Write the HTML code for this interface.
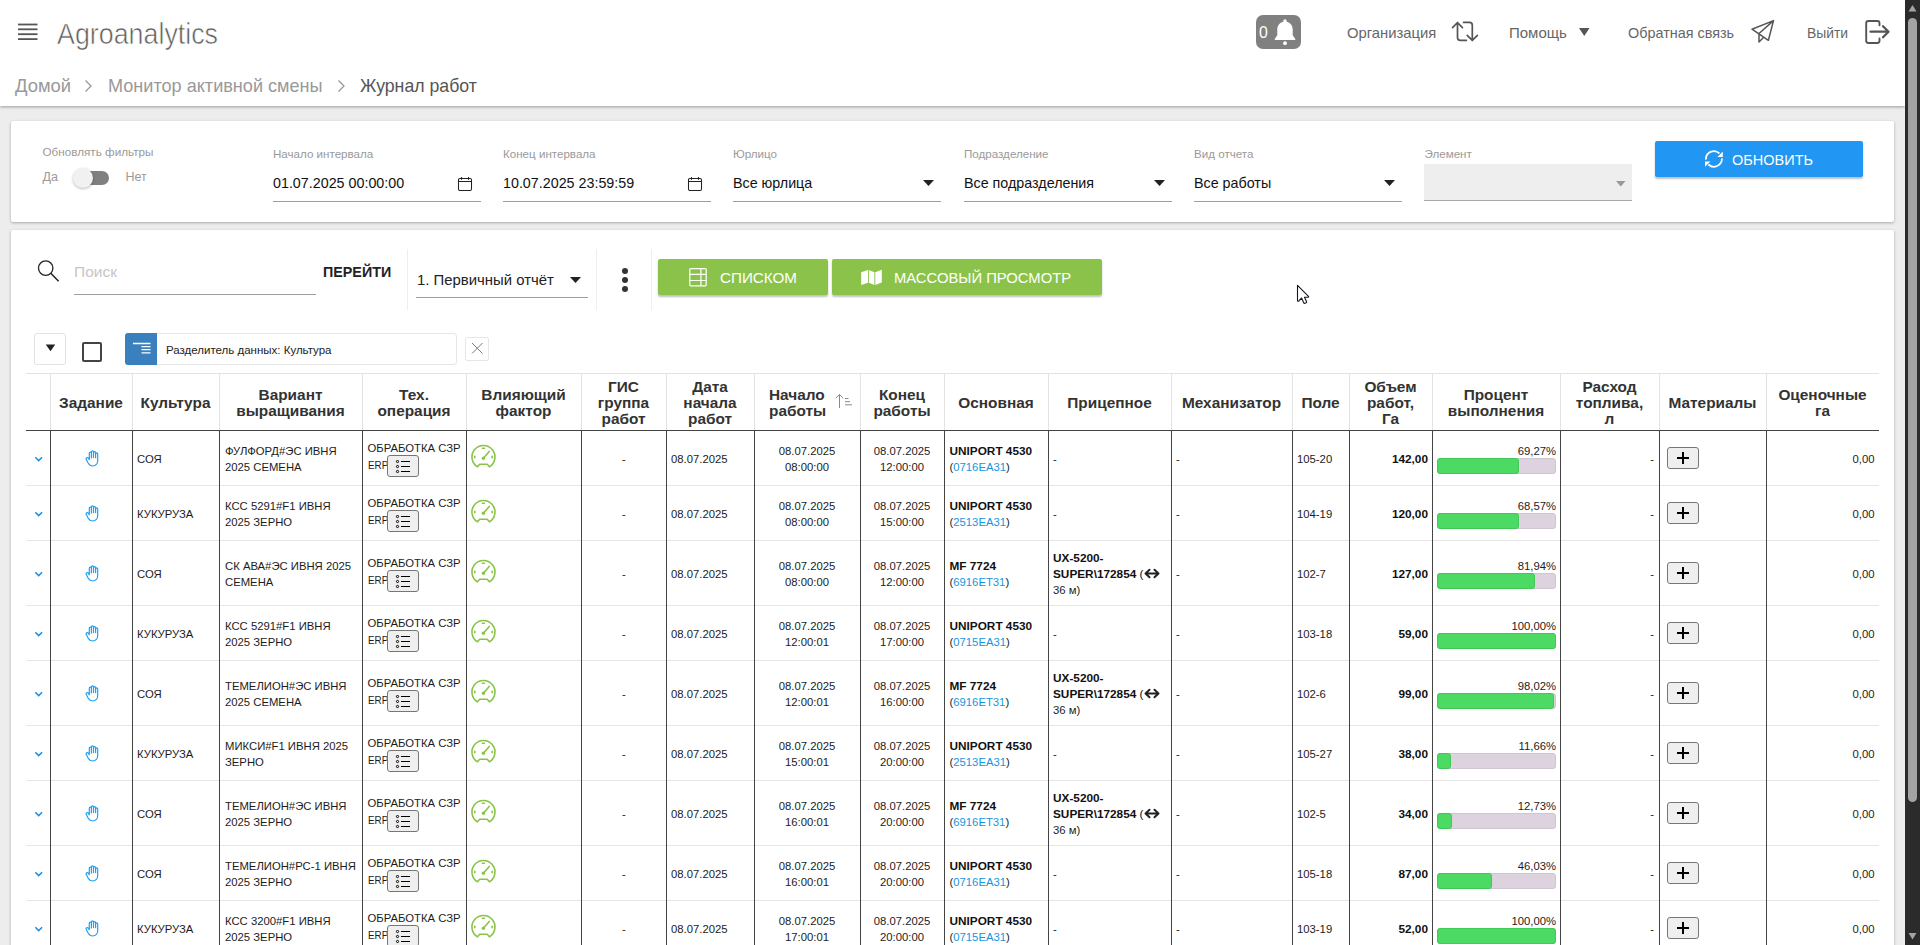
<!DOCTYPE html><html><head><meta charset="utf-8"><style>
html,body{margin:0;padding:0}
body{width:1920px;height:945px;overflow:hidden;position:relative;background:#ededed;font-family:"Liberation Sans",sans-serif}
.t{position:absolute;white-space:nowrap;line-height:normal}
.r{position:absolute;box-sizing:border-box}
</style></head><body>
<div class="r" style="left:0px;top:0px;width:1905px;height:106px;background:#fff;box-shadow:0 1px 3px rgba(0,0,0,.35)"></div>
<svg class="r" style="left:17px;top:22px" width="22" height="20" viewBox="0 0 22 20"><rect x="1" y="1.6" width="19.5" height="1.8" fill="#555"/><rect x="1" y="6.4" width="19.5" height="1.8" fill="#555"/><rect x="1" y="11.3" width="19.5" height="1.8" fill="#555"/><rect x="1" y="16.2" width="19.5" height="1.8" fill="#555"/></svg>
<div class="t" style="left:57px;top:18px;font-size:29.0px;color:#606060;font-weight:normal;transform:scaleX(.925);transform-origin:left;-webkit-text-stroke:0.6px #fff">Agroanalytics</div>
<div class="r" style="left:1256px;top:15px;width:45px;height:34px;background:#808080;border-radius:7px"></div>
<div class="t" style="left:1259px;top:24px;font-size:15.8px;color:#fff;font-weight:normal;">0</div>
<svg class="r" style="left:1271.5px;top:17px" width="26" height="30" viewBox="0 0 26 30"><path d="M13 2.2a1.7 1.7 0 0 1 1.7 1.7v.9c3.6.8 6 4 6 7.7v5.8l2.6 3.6v1H2.7v-1l2.6-3.6v-5.8c0-3.7 2.4-6.9 6-7.7v-.9A1.7 1.7 0 0 1 13 2.2z" fill="#fff"/><circle cx="13" cy="26.2" r="1.9" fill="#fff"/></svg>
<div class="t" style="left:1347px;top:25px;font-size:14.8px;color:#666;font-weight:normal;">Организация</div>
<svg class="r" style="left:1450px;top:20px" width="30" height="24" viewBox="0 0 30 24"><g fill="none" stroke="#555" stroke-width="1.7" stroke-linecap="round" stroke-linejoin="round"><path d="M2.6 7.6 7.5 2.5l4.9 5.1M7.5 2.5v15c0 1.7 1.2 2.9 2.9 2.9h5.9"/><path d="M27.4 15.3l-5.1 5.1-5.1-5.1M22.3 20.4V5.3c0-1.7-1.2-2.9-2.9-2.9h-5.8"/></g></svg>
<div class="t" style="left:1509px;top:24px;font-size:15.0px;color:#666;font-weight:normal;">Помощь</div>
<svg class="r" style="left:1579px;top:28px" width="11" height="9" viewBox="0 0 11 9"><path d="M0 0h10.5L5.25 8z" fill="#555"/></svg>
<div class="t" style="left:1628px;top:25px;font-size:14.4px;color:#666;font-weight:normal;">Обратная связь</div>
<svg class="r" style="left:1750px;top:19px" width="26" height="26" viewBox="0 0 26 26"><g fill="none" stroke="#555" stroke-width="1.5" stroke-linejoin="round"><path d="M23.5 1.6 2 10.2l16.4 11.1z M23.5 1.6 9 14.5v8.6l4.2-4.4"/></g></svg>
<div class="t" style="left:1807px;top:25px;font-size:13.9px;color:#666;font-weight:normal;">Выйти</div>
<svg class="r" style="left:1864px;top:19px" width="28" height="26" viewBox="0 0 28 26"><g fill="none" stroke="#555" stroke-linecap="round" stroke-linejoin="round"><path d="M15.5 6.2V4.2c0-1.3-.9-2.2-2.2-2.2H4.4C3.1 2 2.2 2.9 2.2 4.2v17.6c0 1.3.9 2.2 2.2 2.2h8.9c1.3 0 2.2-.9 2.2-2.2v-2.4" stroke-width="1.9"/><path d="M6.5 12.7h17.5M19 7.2l5.5 5.5-5.5 5.5" stroke-width="2.3"/></g></svg>
<div class="t" style="left:15px;top:75px;font-size:18.4px;color:#999;font-weight:normal;">Домой</div>
<svg class="r" style="left:84px;top:79px" width="9" height="14" viewBox="0 0 9 14"><path d="M1.5 1.5 7 7l-5.5 5.5" fill="none" stroke="#999" stroke-width="1.3"/></svg>
<div class="t" style="left:108px;top:76px;font-size:18.1px;color:#999;font-weight:normal;">Монитор активной смены</div>
<svg class="r" style="left:337px;top:79px" width="9" height="14" viewBox="0 0 9 14"><path d="M1.5 1.5 7 7l-5.5 5.5" fill="none" stroke="#999" stroke-width="1.3"/></svg>
<div class="t" style="left:360px;top:76px;font-size:17.7px;color:#555;font-weight:normal;">Журнал работ</div>
<div class="r" style="left:11px;top:121px;width:1883px;height:101px;background:#fff;border-radius:2px;box-shadow:0 1px 3px rgba(0,0,0,.3)"></div>
<div class="t" style="left:42.5px;top:145px;font-size:11.7px;color:#9a9a9a;font-weight:normal;">Обновлять фильтры</div>
<div class="t" style="left:42.5px;top:170px;font-size:12.5px;color:#9a9a9a;font-weight:normal;">Да</div>
<div class="t" style="left:125.5px;top:170px;font-size:12.5px;color:#9a9a9a;font-weight:normal;">Нет</div>
<div class="r" style="left:76px;top:171px;width:33px;height:14px;background:#808080;border-radius:7px"></div>
<div class="r" style="left:73px;top:168px;width:20px;height:20px;background:#f1f1f1;border-radius:50%;box-shadow:0 1px 3px rgba(0,0,0,.28)"></div>
<div class="t" style="left:273px;top:147px;font-size:11.6px;color:#9a9a9a;font-weight:normal;">Начало интервала</div>
<div class="t" style="left:273px;top:175px;font-size:14.3px;color:#111;font-weight:normal;">01.07.2025 00:00:00</div>
<div class="r" style="left:273px;top:201px;width:208px;height:1px;background:#9e9e9e"></div>
<svg class="r" style="left:457px;top:176px" width="16" height="16" viewBox="0 0 16 16"><g fill="none" stroke="#222" stroke-width="1.05"><rect x="1.5" y="2.5" width="13" height="12" rx="1.4"/><path d="M1.5 5.5h13"/><path d="M4.5 1v2.7M11.5 1v2.7"/></g></svg>
<div class="t" style="left:503px;top:147px;font-size:11.6px;color:#9a9a9a;font-weight:normal;">Конец интервала</div>
<div class="t" style="left:503px;top:175px;font-size:14.3px;color:#111;font-weight:normal;">10.07.2025 23:59:59</div>
<div class="r" style="left:503px;top:201px;width:208px;height:1px;background:#9e9e9e"></div>
<svg class="r" style="left:687px;top:176px" width="16" height="16" viewBox="0 0 16 16"><g fill="none" stroke="#222" stroke-width="1.05"><rect x="1.5" y="2.5" width="13" height="12" rx="1.4"/><path d="M1.5 5.5h13"/><path d="M4.5 1v2.7M11.5 1v2.7"/></g></svg>
<div class="t" style="left:733px;top:147px;font-size:11.6px;color:#9a9a9a;font-weight:normal;">Юрлицо</div>
<div class="t" style="left:733px;top:175px;font-size:14.3px;color:#111;font-weight:normal;">Все юрлица</div>
<div class="r" style="left:733px;top:201px;width:208px;height:1px;background:#9e9e9e"></div>
<svg class="r" style="left:923px;top:180px" width="12" height="7" viewBox="0 0 12 7"><path d="M0 0h11L5.5 6z" fill="#222"/></svg>
<div class="t" style="left:964px;top:147px;font-size:11.6px;color:#9a9a9a;font-weight:normal;">Подразделение</div>
<div class="t" style="left:964px;top:175px;font-size:14.3px;color:#111;font-weight:normal;">Все подразделения</div>
<div class="r" style="left:964px;top:201px;width:208px;height:1px;background:#9e9e9e"></div>
<svg class="r" style="left:1154px;top:180px" width="12" height="7" viewBox="0 0 12 7"><path d="M0 0h11L5.5 6z" fill="#222"/></svg>
<div class="t" style="left:1194px;top:147px;font-size:11.6px;color:#9a9a9a;font-weight:normal;">Вид отчета</div>
<div class="t" style="left:1194px;top:175px;font-size:14.3px;color:#111;font-weight:normal;">Все работы</div>
<div class="r" style="left:1194px;top:201px;width:208px;height:1px;background:#9e9e9e"></div>
<svg class="r" style="left:1384px;top:180px" width="12" height="7" viewBox="0 0 12 7"><path d="M0 0h11L5.5 6z" fill="#222"/></svg>
<div class="t" style="left:1424.5px;top:147px;font-size:11.6px;color:#9a9a9a;font-weight:normal;">Элемент</div>
<div class="r" style="left:1424px;top:164px;width:208px;height:37px;background:#eee;border-bottom:1px solid #aaa"></div>
<svg class="r" style="left:1616px;top:181px" width="10" height="6" viewBox="0 0 10 6"><path d="M0 0h9.5L4.75 5.5z" fill="#999"/></svg>
<div class="r" style="left:1655px;top:141px;width:208px;height:36px;background:#2196f3;border-radius:2px;box-shadow:0 2px 2px rgba(0,0,0,.25)"></div>
<svg class="r" style="left:1703px;top:149px" width="22" height="21" viewBox="0 0 22 21"><g fill="none" stroke="#fff" stroke-width="1.8"><path d="M2.9 10.6A8 8 0 0 1 16.4 4.4"/><path d="M18.9 9.4A8 8 0 0 1 5.4 15.5"/></g><path d="M19.8 2.6v5.3h-5.3z" fill="#fff"/><path d="M2 12.4v5.3L7.3 12.4z" fill="#fff"/></svg>
<div class="t" style="left:1732px;top:152px;font-size:14.5px;color:#fff;font-weight:normal;">ОБНОВИТЬ</div>
<div class="r" style="left:11px;top:230px;width:1883px;height:760px;background:#fff;border-radius:2px;box-shadow:0 1px 3px rgba(0,0,0,.3)"></div>
<svg class="r" style="left:36px;top:260px" width="24" height="23" viewBox="0 0 24 23"><g fill="none" stroke="#222" stroke-width="1.3"><circle cx="9.7" cy="8.1" r="7.2"/><path d="M14.8 13.3 22.6 21.3" stroke-width="1.5"/></g></svg>
<div class="t" style="left:74px;top:263px;font-size:15.5px;color:#c6c6c6;font-weight:normal;">Поиск</div>
<div class="r" style="left:74px;top:294px;width:242px;height:1px;background:#9e9e9e"></div>
<div class="t" style="left:323px;top:264px;font-size:14.3px;color:#222;font-weight:bold;">ПЕРЕЙТИ</div>
<div class="r" style="left:407px;top:249px;width:1px;height:61px;background:#eee"></div>
<div class="t" style="left:417px;top:272px;font-size:14.9px;color:#222;font-weight:normal;">1. Первичный отчёт</div>
<svg class="r" style="left:570px;top:276.5px" width="12" height="7" viewBox="0 0 12 7"><path d="M0 0h11L5.5 6z" fill="#222"/></svg>
<div class="r" style="left:416px;top:297px;width:172px;height:1px;background:#9e9e9e"></div>
<div class="r" style="left:596px;top:249px;width:1px;height:61px;background:#eee"></div>
<div class="r" style="left:621.5px;top:268.20000000000005px;width:6px;height:6px;border-radius:50%;background:#333"></div>
<div class="r" style="left:621.5px;top:277.0px;width:6px;height:6px;border-radius:50%;background:#333"></div>
<div class="r" style="left:621.5px;top:285.5px;width:6px;height:6px;border-radius:50%;background:#333"></div>
<div class="r" style="left:651px;top:249px;width:1px;height:61px;background:#eee"></div>
<div class="r" style="left:658px;top:259px;width:170px;height:36px;background:#8bc34a;border-radius:2px;box-shadow:0 2px 2px rgba(0,0,0,.25)"></div>
<svg class="r" style="left:688px;top:267px" width="20" height="20" viewBox="0 0 20 20"><g fill="none" stroke="#fff" stroke-width="1.2"><rect x="1.8" y="1.6" width="16.4" height="17.2" rx="1"/><path d="M1.8 7.3h16.4M1.8 13.5h16.4M12.9 1.6v17.2"/></g></svg>
<div class="t" style="left:720px;top:269px;font-size:15.2px;color:#fff;font-weight:normal;">СПИСКОМ</div>
<div class="r" style="left:832px;top:259px;width:270px;height:36px;background:#8bc34a;border-radius:2px;box-shadow:0 2px 2px rgba(0,0,0,.25)"></div>
<svg class="r" style="left:860px;top:269px" width="23" height="17" viewBox="0 0 23 17"><path d="M1.2 3.3 8 1.1v12.7L1.2 16.1z M8.9 1.1l5.5 2.2v12.8l-5.5-2.3z M15.3 3.3l6.5-2.5v12.8l-6.5 2.5z" fill="#fff"/></svg>
<div class="t" style="left:894px;top:270px;font-size:14.8px;color:#fff;font-weight:normal;">МАССОВЫЙ ПРОСМОТР</div>
<svg class="r" style="left:1296px;top:284px" width="15" height="22" viewBox="0 0 15 22"><path d="M1.5 1.3V16.6c0 .8.7 1 1.2.5L5.6 14l2.2 4.9c.3.5.8.6 1.3.4l1-.5c.5-.3.6-.8.4-1.3L8.5 13.2h3.6c.6 0 .8-.5.4-.9z" fill="#fff" stroke="#15151c" stroke-width="1.1" stroke-linejoin="round"/></svg>
<div class="r" style="left:34px;top:333px;width:32px;height:32px;border:1px solid #e3e3e3;border-radius:3px;background:#fff"></div>
<svg class="r" style="left:45px;top:344px" width="11" height="8" viewBox="0 0 11 8"><path d="M0.8 0.5h9.4L5.5 7.2z" fill="#222"/></svg>
<div class="r" style="left:82px;top:342px;width:20px;height:20px;border:2px solid #444;border-radius:2px"></div>
<div class="r" style="left:125px;top:333px;width:332px;height:32px;border:1px solid #e6e6e6;border-radius:3px;background:#fff"></div>
<div class="r" style="left:125px;top:333px;width:32px;height:32px;background:#3b80be;border-radius:3px 0 0 3px"></div>
<svg class="r" style="left:132px;top:342px" width="20" height="14" viewBox="0 0 20 14"><g stroke="#fff" stroke-width="1.3"><path d="M1 1.5h17.5M9.5 4.6h9M9.5 7.7h9M9.5 10.8h9"/></g></svg>
<div class="t" style="left:166px;top:344px;font-size:11.5px;color:#222;font-weight:normal;">Разделитель данных: Культура</div>
<div class="r" style="left:465px;top:337px;width:24px;height:24px;border:1px solid #e6e6e6;border-radius:2px"></div>
<svg class="r" style="left:471px;top:342px" width="13" height="13" viewBox="0 0 13 13"><path d="M1 1l10.5 10.5M11.5 1 1 11.5" stroke="#7a7a7a" stroke-width="1"/></svg>
<div class="r" style="left:26px;top:373px;width:1853px;height:1px;background:#e3e3e3"></div>
<div class="r" style="left:50px;top:374px;width:1px;height:56px;background:#e3e3e3"></div>
<div class="r" style="left:132px;top:374px;width:1px;height:56px;background:#e3e3e3"></div>
<div class="r" style="left:219px;top:374px;width:1px;height:56px;background:#e3e3e3"></div>
<div class="r" style="left:362px;top:374px;width:1px;height:56px;background:#e3e3e3"></div>
<div class="r" style="left:466px;top:374px;width:1px;height:56px;background:#e3e3e3"></div>
<div class="r" style="left:581px;top:374px;width:1px;height:56px;background:#e3e3e3"></div>
<div class="r" style="left:666px;top:374px;width:1px;height:56px;background:#e3e3e3"></div>
<div class="r" style="left:754px;top:374px;width:1px;height:56px;background:#e3e3e3"></div>
<div class="r" style="left:860px;top:374px;width:1px;height:56px;background:#e3e3e3"></div>
<div class="r" style="left:944px;top:374px;width:1px;height:56px;background:#e3e3e3"></div>
<div class="r" style="left:1048px;top:374px;width:1px;height:56px;background:#e3e3e3"></div>
<div class="r" style="left:1171px;top:374px;width:1px;height:56px;background:#e3e3e3"></div>
<div class="r" style="left:1292px;top:374px;width:1px;height:56px;background:#e3e3e3"></div>
<div class="r" style="left:1349px;top:374px;width:1px;height:56px;background:#e3e3e3"></div>
<div class="r" style="left:1432px;top:374px;width:1px;height:56px;background:#e3e3e3"></div>
<div class="r" style="left:1560px;top:374px;width:1px;height:56px;background:#e3e3e3"></div>
<div class="r" style="left:1659px;top:374px;width:1px;height:56px;background:#e3e3e3"></div>
<div class="r" style="left:1766px;top:374px;width:1px;height:56px;background:#e3e3e3"></div>
<div class="r" style="left:26px;top:430px;width:1853px;height:1px;background:#444"></div>
<div class="t" style="left:-59.0px;width:300px;top:394px;font-size:15.4px;color:#333;font-weight:bold;text-align:center;">Задание</div>
<div class="t" style="left:25.5px;width:300px;top:394px;font-size:15.4px;color:#333;font-weight:bold;text-align:center;">Культура</div>
<div class="t" style="left:140.5px;width:300px;top:386px;font-size:15.4px;color:#333;font-weight:bold;text-align:center;">Вариант</div>
<div class="t" style="left:140.5px;width:300px;top:402px;font-size:15.4px;color:#333;font-weight:bold;text-align:center;">выращивания</div>
<div class="t" style="left:264.0px;width:300px;top:386px;font-size:15.4px;color:#333;font-weight:bold;text-align:center;">Тех.</div>
<div class="t" style="left:264.0px;width:300px;top:402px;font-size:15.4px;color:#333;font-weight:bold;text-align:center;">операция</div>
<div class="t" style="left:373.5px;width:300px;top:386px;font-size:15.4px;color:#333;font-weight:bold;text-align:center;">Влияющий</div>
<div class="t" style="left:373.5px;width:300px;top:402px;font-size:15.4px;color:#333;font-weight:bold;text-align:center;">фактор</div>
<div class="t" style="left:473.5px;width:300px;top:378px;font-size:15.4px;color:#333;font-weight:bold;text-align:center;">ГИС</div>
<div class="t" style="left:473.5px;width:300px;top:394px;font-size:15.4px;color:#333;font-weight:bold;text-align:center;">группа</div>
<div class="t" style="left:473.5px;width:300px;top:410px;font-size:15.4px;color:#333;font-weight:bold;text-align:center;">работ</div>
<div class="t" style="left:560.0px;width:300px;top:378px;font-size:15.4px;color:#333;font-weight:bold;text-align:center;">Дата</div>
<div class="t" style="left:560.0px;width:300px;top:394px;font-size:15.4px;color:#333;font-weight:bold;text-align:center;">начала</div>
<div class="t" style="left:560.0px;width:300px;top:410px;font-size:15.4px;color:#333;font-weight:bold;text-align:center;">работ</div>
<div class="t" style="left:752.0px;width:300px;top:386px;font-size:15.4px;color:#333;font-weight:bold;text-align:center;">Конец</div>
<div class="t" style="left:752.0px;width:300px;top:402px;font-size:15.4px;color:#333;font-weight:bold;text-align:center;">работы</div>
<div class="t" style="left:846.0px;width:300px;top:394px;font-size:15.4px;color:#333;font-weight:bold;text-align:center;">Основная</div>
<div class="t" style="left:959.5px;width:300px;top:394px;font-size:15.4px;color:#333;font-weight:bold;text-align:center;">Прицепное</div>
<div class="t" style="left:1081.5px;width:300px;top:394px;font-size:15.4px;color:#333;font-weight:bold;text-align:center;">Механизатор</div>
<div class="t" style="left:1170.5px;width:300px;top:394px;font-size:15.4px;color:#333;font-weight:bold;text-align:center;">Поле</div>
<div class="t" style="left:1240.5px;width:300px;top:378px;font-size:15.4px;color:#333;font-weight:bold;text-align:center;">Объем</div>
<div class="t" style="left:1240.5px;width:300px;top:394px;font-size:15.4px;color:#333;font-weight:bold;text-align:center;">работ,</div>
<div class="t" style="left:1240.5px;width:300px;top:410px;font-size:15.4px;color:#333;font-weight:bold;text-align:center;">Га</div>
<div class="t" style="left:1346.0px;width:300px;top:386px;font-size:15.4px;color:#333;font-weight:bold;text-align:center;">Процент</div>
<div class="t" style="left:1346.0px;width:300px;top:402px;font-size:15.4px;color:#333;font-weight:bold;text-align:center;">выполнения</div>
<div class="t" style="left:1459.5px;width:300px;top:378px;font-size:15.4px;color:#333;font-weight:bold;text-align:center;">Расход</div>
<div class="t" style="left:1459.5px;width:300px;top:394px;font-size:15.4px;color:#333;font-weight:bold;text-align:center;">топлива,</div>
<div class="t" style="left:1459.5px;width:300px;top:410px;font-size:15.4px;color:#333;font-weight:bold;text-align:center;">л</div>
<div class="t" style="left:1562.5px;width:300px;top:394px;font-size:15.4px;color:#333;font-weight:bold;text-align:center;">Материалы</div>
<div class="t" style="left:1672.5px;width:300px;top:386px;font-size:15.4px;color:#333;font-weight:bold;text-align:center;">Оценочные</div>
<div class="t" style="left:1672.5px;width:300px;top:402px;font-size:15.4px;color:#333;font-weight:bold;text-align:center;">га</div>
<div class="t" style="left:769px;top:386px;font-size:15.4px;color:#333;font-weight:bold;">Начало</div>
<div class="t" style="left:769px;top:402px;font-size:15.4px;color:#333;font-weight:bold;">работы</div>
<svg class="r" style="left:834px;top:393px" width="20" height="16" viewBox="0 0 20 16"><g fill="none" stroke="#8a8a8a" stroke-width="1"><path d="M5.5 15V1.5M1.8 5.2 5.5 1.5l3.7 3.7"/><path d="M11 5.5h3.5M11 8.7h5M11 11.8h7"/></g></svg>
<div class="r" style="left:50px;top:431px;width:1px;height:55px;background:#444"></div>
<div class="r" style="left:132px;top:431px;width:1px;height:55px;background:#444"></div>
<div class="r" style="left:219px;top:431px;width:1px;height:55px;background:#444"></div>
<div class="r" style="left:362px;top:431px;width:1px;height:55px;background:#444"></div>
<div class="r" style="left:466px;top:431px;width:1px;height:55px;background:#444"></div>
<div class="r" style="left:581px;top:431px;width:1px;height:55px;background:#444"></div>
<div class="r" style="left:666px;top:431px;width:1px;height:55px;background:#444"></div>
<div class="r" style="left:754px;top:431px;width:1px;height:55px;background:#444"></div>
<div class="r" style="left:860px;top:431px;width:1px;height:55px;background:#444"></div>
<div class="r" style="left:944px;top:431px;width:1px;height:55px;background:#444"></div>
<div class="r" style="left:1048px;top:431px;width:1px;height:55px;background:#444"></div>
<div class="r" style="left:1171px;top:431px;width:1px;height:55px;background:#444"></div>
<div class="r" style="left:1292px;top:431px;width:1px;height:55px;background:#444"></div>
<div class="r" style="left:1349px;top:431px;width:1px;height:55px;background:#444"></div>
<div class="r" style="left:1432px;top:431px;width:1px;height:55px;background:#444"></div>
<div class="r" style="left:1560px;top:431px;width:1px;height:55px;background:#444"></div>
<div class="r" style="left:1659px;top:431px;width:1px;height:55px;background:#444"></div>
<div class="r" style="left:1766px;top:431px;width:1px;height:55px;background:#444"></div>
<div class="r" style="left:26px;top:485px;width:1853px;height:1px;background:#e6e6e6"></div>
<svg class="r" style="left:34px;top:456px" width="9" height="6" viewBox="0 0 9 6"><path d="M1.3 1.2l3.4 3.4 3.4-3.4" fill="none" stroke="#1e90e0" stroke-width="1.5"/></svg>
<svg class="r" style="left:85px;top:450px" width="15" height="17" viewBox="0 0 15 17"><path d="M4.3 9.2V3.1a1.05 1.05 0 0 1 2.1 0V8 M6.4 7.6V1.9a1.05 1.05 0 0 1 2.1 0v5.7 M8.5 7.6V2.7a1.05 1.05 0 0 1 2.1 0v5 M10.6 7.6V4a1.05 1.05 0 0 1 2.1 0v6.6c0 3.1-2 5.4-5 5.4-2.3 0-3.4-1-4.6-3L1.3 9.5c-.5-.8-.2-1.5.4-1.8.6-.3 1.2 0 1.6.5l1 1.5" fill="none" stroke="#1da1f2" stroke-width="1.2" stroke-linecap="round" stroke-linejoin="round"/></svg>
<div class="t" style="left:137px;top:453px;font-size:11.3px;color:#1c1c1c;font-weight:normal;">СОЯ</div>
<div class="t" style="left:225px;top:445px;font-size:11.3px;color:#1c1c1c;font-weight:normal;">ФУЛФОРД#ЭС ИВНЯ</div>
<div class="t" style="left:225px;top:461px;font-size:11.3px;color:#1c1c1c;font-weight:normal;">2025 СЕМЕНА</div>
<div class="t" style="left:367.5px;top:442px;font-size:11.3px;color:#1c1c1c;font-weight:normal;">ОБРАБОТКА СЗР</div>
<div class="t" style="left:367.5px;top:459px;font-size:11.3px;color:#1c1c1c;font-weight:normal;transform:scaleX(.87);transform-origin:left">ERP</div>
<div class="r" style="left:387px;top:455px;width:32px;height:22px;background:#efefef;border:1px solid #767676;border-radius:3px"></div>
<svg class="r" style="left:395px;top:460px" width="16" height="14" viewBox="0 0 16 14"><g fill="none" stroke="#000" stroke-width="1"><circle cx="2.5" cy="1.5" r="1.1"/><circle cx="2.5" cy="6.5" r="1.1"/><circle cx="2.5" cy="11.5" r="1.1"/><path d="M6 1.5h9M6 6.5h9M6 11.5h9" stroke-width="1.1"/></g></svg>
<svg class="r" style="left:470px;top:444px" width="27" height="26" viewBox="0 0 27 26"><g fill="none" stroke="#8bc34a" stroke-width="1.6" stroke-linecap="round" stroke-linejoin="round"><path d="M7.5 22.8A11.5 11.5 0 1 1 19.4 22.8L17.2 20.3H9.7z"/><path d="M13.4 14.3 19.2 7.4"/><path d="M12.4 4.3h2M4.8 12.2v1.6M22.1 12.2v1.6"/></g><circle cx="13.4" cy="14.3" r="1.7" fill="#8bc34a"/></svg>
<div class="t" style="left:474px;width:300px;top:453px;font-size:11.3px;color:#1c1c1c;font-weight:normal;text-align:center;">-</div>
<div class="t" style="left:671px;top:453px;font-size:11.3px;color:#1c1c1c;font-weight:normal;">08.07.2025</div>
<div class="t" style="left:657px;width:300px;top:445px;font-size:11.3px;color:#1c1c1c;font-weight:normal;text-align:center;">08.07.2025</div>
<div class="t" style="left:657px;width:300px;top:461px;font-size:11.3px;color:#1c1c1c;font-weight:normal;text-align:center;">08:00:00</div>
<div class="t" style="left:752px;width:300px;top:445px;font-size:11.3px;color:#1c1c1c;font-weight:normal;text-align:center;">08.07.2025</div>
<div class="t" style="left:752px;width:300px;top:461px;font-size:11.3px;color:#1c1c1c;font-weight:normal;text-align:center;">12:00:00</div>
<div class="t" style="left:949.5px;top:444px;font-size:11.8px;color:#111;font-weight:bold;">UNIPORT 4530</div>
<div class="t" style="left:949.5px;top:461px;font-size:11.3px;color:#1c1c1c;font-weight:normal;">(<span style="color:#1496de">0716EA31</span>)</div>
<div class="t" style="left:1053px;top:453px;font-size:11.3px;color:#1c1c1c;font-weight:normal;">-</div>
<div class="t" style="left:1176px;top:453px;font-size:11.3px;color:#1c1c1c;font-weight:normal;">-</div>
<div class="t" style="left:1297px;top:453px;font-size:11.3px;color:#1c1c1c;font-weight:normal;">105-20</div>
<div class="t" style="right:492px;top:452px;font-size:11.8px;color:#111;font-weight:bold;text-align:right;">142,00</div>
<div class="t" style="right:364px;top:445px;font-size:11.3px;color:#1c1c1c;font-weight:normal;text-align:right;">69,27%</div>
<div class="r" style="left:1437px;top:458px;width:119px;height:16px;background:#dcd3de;border:1px solid #cfc6d2;border-radius:3px"></div>
<div class="r" style="left:1437px;top:458px;width:82px;height:16px;background:#4cd964;border:1px solid #3fc957;border-radius:3px"></div>
<div class="t" style="right:266px;top:453px;font-size:11.3px;color:#1c1c1c;font-weight:normal;text-align:right;">-</div>
<div class="r" style="left:1667px;top:447px;width:32px;height:22px;background:#efefef;border:1px solid #767676;border-radius:3px"></div>
<svg class="r" style="left:1676px;top:451px" width="14" height="14" viewBox="0 0 14 14"><path d="M7 1v12M1 7h12" stroke="#000" stroke-width="2"/></svg>
<div class="t" style="right:45.5px;top:453px;font-size:11.3px;color:#1c1c1c;font-weight:normal;text-align:right;">0,00</div>
<div class="r" style="left:50px;top:485px;width:1px;height:55px;background:#444"></div>
<div class="r" style="left:132px;top:485px;width:1px;height:55px;background:#444"></div>
<div class="r" style="left:219px;top:485px;width:1px;height:55px;background:#444"></div>
<div class="r" style="left:362px;top:485px;width:1px;height:55px;background:#444"></div>
<div class="r" style="left:466px;top:485px;width:1px;height:55px;background:#444"></div>
<div class="r" style="left:581px;top:485px;width:1px;height:55px;background:#444"></div>
<div class="r" style="left:666px;top:485px;width:1px;height:55px;background:#444"></div>
<div class="r" style="left:754px;top:485px;width:1px;height:55px;background:#444"></div>
<div class="r" style="left:860px;top:485px;width:1px;height:55px;background:#444"></div>
<div class="r" style="left:944px;top:485px;width:1px;height:55px;background:#444"></div>
<div class="r" style="left:1048px;top:485px;width:1px;height:55px;background:#444"></div>
<div class="r" style="left:1171px;top:485px;width:1px;height:55px;background:#444"></div>
<div class="r" style="left:1292px;top:485px;width:1px;height:55px;background:#444"></div>
<div class="r" style="left:1349px;top:485px;width:1px;height:55px;background:#444"></div>
<div class="r" style="left:1432px;top:485px;width:1px;height:55px;background:#444"></div>
<div class="r" style="left:1560px;top:485px;width:1px;height:55px;background:#444"></div>
<div class="r" style="left:1659px;top:485px;width:1px;height:55px;background:#444"></div>
<div class="r" style="left:1766px;top:485px;width:1px;height:55px;background:#444"></div>
<div class="r" style="left:26px;top:540px;width:1853px;height:1px;background:#e6e6e6"></div>
<svg class="r" style="left:34px;top:511px" width="9" height="6" viewBox="0 0 9 6"><path d="M1.3 1.2l3.4 3.4 3.4-3.4" fill="none" stroke="#1e90e0" stroke-width="1.5"/></svg>
<svg class="r" style="left:85px;top:505px" width="15" height="17" viewBox="0 0 15 17"><path d="M4.3 9.2V3.1a1.05 1.05 0 0 1 2.1 0V8 M6.4 7.6V1.9a1.05 1.05 0 0 1 2.1 0v5.7 M8.5 7.6V2.7a1.05 1.05 0 0 1 2.1 0v5 M10.6 7.6V4a1.05 1.05 0 0 1 2.1 0v6.6c0 3.1-2 5.4-5 5.4-2.3 0-3.4-1-4.6-3L1.3 9.5c-.5-.8-.2-1.5.4-1.8.6-.3 1.2 0 1.6.5l1 1.5" fill="none" stroke="#1da1f2" stroke-width="1.2" stroke-linecap="round" stroke-linejoin="round"/></svg>
<div class="t" style="left:137px;top:508px;font-size:11.3px;color:#1c1c1c;font-weight:normal;">КУКУРУЗА</div>
<div class="t" style="left:225px;top:500px;font-size:11.3px;color:#1c1c1c;font-weight:normal;">КСС 5291#F1 ИВНЯ</div>
<div class="t" style="left:225px;top:516px;font-size:11.3px;color:#1c1c1c;font-weight:normal;">2025 ЗЕРНО</div>
<div class="t" style="left:367.5px;top:497px;font-size:11.3px;color:#1c1c1c;font-weight:normal;">ОБРАБОТКА СЗР</div>
<div class="t" style="left:367.5px;top:514px;font-size:11.3px;color:#1c1c1c;font-weight:normal;transform:scaleX(.87);transform-origin:left">ERP</div>
<div class="r" style="left:387px;top:510px;width:32px;height:22px;background:#efefef;border:1px solid #767676;border-radius:3px"></div>
<svg class="r" style="left:395px;top:515px" width="16" height="14" viewBox="0 0 16 14"><g fill="none" stroke="#000" stroke-width="1"><circle cx="2.5" cy="1.5" r="1.1"/><circle cx="2.5" cy="6.5" r="1.1"/><circle cx="2.5" cy="11.5" r="1.1"/><path d="M6 1.5h9M6 6.5h9M6 11.5h9" stroke-width="1.1"/></g></svg>
<svg class="r" style="left:470px;top:499px" width="27" height="26" viewBox="0 0 27 26"><g fill="none" stroke="#8bc34a" stroke-width="1.6" stroke-linecap="round" stroke-linejoin="round"><path d="M7.5 22.8A11.5 11.5 0 1 1 19.4 22.8L17.2 20.3H9.7z"/><path d="M13.4 14.3 19.2 7.4"/><path d="M12.4 4.3h2M4.8 12.2v1.6M22.1 12.2v1.6"/></g><circle cx="13.4" cy="14.3" r="1.7" fill="#8bc34a"/></svg>
<div class="t" style="left:474px;width:300px;top:508px;font-size:11.3px;color:#1c1c1c;font-weight:normal;text-align:center;">-</div>
<div class="t" style="left:671px;top:508px;font-size:11.3px;color:#1c1c1c;font-weight:normal;">08.07.2025</div>
<div class="t" style="left:657px;width:300px;top:500px;font-size:11.3px;color:#1c1c1c;font-weight:normal;text-align:center;">08.07.2025</div>
<div class="t" style="left:657px;width:300px;top:516px;font-size:11.3px;color:#1c1c1c;font-weight:normal;text-align:center;">08:00:00</div>
<div class="t" style="left:752px;width:300px;top:500px;font-size:11.3px;color:#1c1c1c;font-weight:normal;text-align:center;">08.07.2025</div>
<div class="t" style="left:752px;width:300px;top:516px;font-size:11.3px;color:#1c1c1c;font-weight:normal;text-align:center;">15:00:00</div>
<div class="t" style="left:949.5px;top:499px;font-size:11.8px;color:#111;font-weight:bold;">UNIPORT 4530</div>
<div class="t" style="left:949.5px;top:516px;font-size:11.3px;color:#1c1c1c;font-weight:normal;">(<span style="color:#1496de">2513EA31</span>)</div>
<div class="t" style="left:1053px;top:508px;font-size:11.3px;color:#1c1c1c;font-weight:normal;">-</div>
<div class="t" style="left:1176px;top:508px;font-size:11.3px;color:#1c1c1c;font-weight:normal;">-</div>
<div class="t" style="left:1297px;top:508px;font-size:11.3px;color:#1c1c1c;font-weight:normal;">104-19</div>
<div class="t" style="right:492px;top:507px;font-size:11.8px;color:#111;font-weight:bold;text-align:right;">120,00</div>
<div class="t" style="right:364px;top:500px;font-size:11.3px;color:#1c1c1c;font-weight:normal;text-align:right;">68,57%</div>
<div class="r" style="left:1437px;top:513px;width:119px;height:16px;background:#dcd3de;border:1px solid #cfc6d2;border-radius:3px"></div>
<div class="r" style="left:1437px;top:513px;width:82px;height:16px;background:#4cd964;border:1px solid #3fc957;border-radius:3px"></div>
<div class="t" style="right:266px;top:508px;font-size:11.3px;color:#1c1c1c;font-weight:normal;text-align:right;">-</div>
<div class="r" style="left:1667px;top:502px;width:32px;height:22px;background:#efefef;border:1px solid #767676;border-radius:3px"></div>
<svg class="r" style="left:1676px;top:506px" width="14" height="14" viewBox="0 0 14 14"><path d="M7 1v12M1 7h12" stroke="#000" stroke-width="2"/></svg>
<div class="t" style="right:45.5px;top:508px;font-size:11.3px;color:#1c1c1c;font-weight:normal;text-align:right;">0,00</div>
<div class="r" style="left:50px;top:540px;width:1px;height:65px;background:#444"></div>
<div class="r" style="left:132px;top:540px;width:1px;height:65px;background:#444"></div>
<div class="r" style="left:219px;top:540px;width:1px;height:65px;background:#444"></div>
<div class="r" style="left:362px;top:540px;width:1px;height:65px;background:#444"></div>
<div class="r" style="left:466px;top:540px;width:1px;height:65px;background:#444"></div>
<div class="r" style="left:581px;top:540px;width:1px;height:65px;background:#444"></div>
<div class="r" style="left:666px;top:540px;width:1px;height:65px;background:#444"></div>
<div class="r" style="left:754px;top:540px;width:1px;height:65px;background:#444"></div>
<div class="r" style="left:860px;top:540px;width:1px;height:65px;background:#444"></div>
<div class="r" style="left:944px;top:540px;width:1px;height:65px;background:#444"></div>
<div class="r" style="left:1048px;top:540px;width:1px;height:65px;background:#444"></div>
<div class="r" style="left:1171px;top:540px;width:1px;height:65px;background:#444"></div>
<div class="r" style="left:1292px;top:540px;width:1px;height:65px;background:#444"></div>
<div class="r" style="left:1349px;top:540px;width:1px;height:65px;background:#444"></div>
<div class="r" style="left:1432px;top:540px;width:1px;height:65px;background:#444"></div>
<div class="r" style="left:1560px;top:540px;width:1px;height:65px;background:#444"></div>
<div class="r" style="left:1659px;top:540px;width:1px;height:65px;background:#444"></div>
<div class="r" style="left:1766px;top:540px;width:1px;height:65px;background:#444"></div>
<div class="r" style="left:26px;top:605px;width:1853px;height:1px;background:#e6e6e6"></div>
<svg class="r" style="left:34px;top:571px" width="9" height="6" viewBox="0 0 9 6"><path d="M1.3 1.2l3.4 3.4 3.4-3.4" fill="none" stroke="#1e90e0" stroke-width="1.5"/></svg>
<svg class="r" style="left:85px;top:565px" width="15" height="17" viewBox="0 0 15 17"><path d="M4.3 9.2V3.1a1.05 1.05 0 0 1 2.1 0V8 M6.4 7.6V1.9a1.05 1.05 0 0 1 2.1 0v5.7 M8.5 7.6V2.7a1.05 1.05 0 0 1 2.1 0v5 M10.6 7.6V4a1.05 1.05 0 0 1 2.1 0v6.6c0 3.1-2 5.4-5 5.4-2.3 0-3.4-1-4.6-3L1.3 9.5c-.5-.8-.2-1.5.4-1.8.6-.3 1.2 0 1.6.5l1 1.5" fill="none" stroke="#1da1f2" stroke-width="1.2" stroke-linecap="round" stroke-linejoin="round"/></svg>
<div class="t" style="left:137px;top:568px;font-size:11.3px;color:#1c1c1c;font-weight:normal;">СОЯ</div>
<div class="t" style="left:225px;top:560px;font-size:11.3px;color:#1c1c1c;font-weight:normal;">СК АВА#ЭС ИВНЯ 2025</div>
<div class="t" style="left:225px;top:576px;font-size:11.3px;color:#1c1c1c;font-weight:normal;">СЕМЕНА</div>
<div class="t" style="left:367.5px;top:557px;font-size:11.3px;color:#1c1c1c;font-weight:normal;">ОБРАБОТКА СЗР</div>
<div class="t" style="left:367.5px;top:574px;font-size:11.3px;color:#1c1c1c;font-weight:normal;transform:scaleX(.87);transform-origin:left">ERP</div>
<div class="r" style="left:387px;top:570px;width:32px;height:22px;background:#efefef;border:1px solid #767676;border-radius:3px"></div>
<svg class="r" style="left:395px;top:575px" width="16" height="14" viewBox="0 0 16 14"><g fill="none" stroke="#000" stroke-width="1"><circle cx="2.5" cy="1.5" r="1.1"/><circle cx="2.5" cy="6.5" r="1.1"/><circle cx="2.5" cy="11.5" r="1.1"/><path d="M6 1.5h9M6 6.5h9M6 11.5h9" stroke-width="1.1"/></g></svg>
<svg class="r" style="left:470px;top:559px" width="27" height="26" viewBox="0 0 27 26"><g fill="none" stroke="#8bc34a" stroke-width="1.6" stroke-linecap="round" stroke-linejoin="round"><path d="M7.5 22.8A11.5 11.5 0 1 1 19.4 22.8L17.2 20.3H9.7z"/><path d="M13.4 14.3 19.2 7.4"/><path d="M12.4 4.3h2M4.8 12.2v1.6M22.1 12.2v1.6"/></g><circle cx="13.4" cy="14.3" r="1.7" fill="#8bc34a"/></svg>
<div class="t" style="left:474px;width:300px;top:568px;font-size:11.3px;color:#1c1c1c;font-weight:normal;text-align:center;">-</div>
<div class="t" style="left:671px;top:568px;font-size:11.3px;color:#1c1c1c;font-weight:normal;">08.07.2025</div>
<div class="t" style="left:657px;width:300px;top:560px;font-size:11.3px;color:#1c1c1c;font-weight:normal;text-align:center;">08.07.2025</div>
<div class="t" style="left:657px;width:300px;top:576px;font-size:11.3px;color:#1c1c1c;font-weight:normal;text-align:center;">08:00:00</div>
<div class="t" style="left:752px;width:300px;top:560px;font-size:11.3px;color:#1c1c1c;font-weight:normal;text-align:center;">08.07.2025</div>
<div class="t" style="left:752px;width:300px;top:576px;font-size:11.3px;color:#1c1c1c;font-weight:normal;text-align:center;">12:00:00</div>
<div class="t" style="left:949.5px;top:559px;font-size:11.8px;color:#111;font-weight:bold;">MF 7724</div>
<div class="t" style="left:949.5px;top:576px;font-size:11.3px;color:#1c1c1c;font-weight:normal;">(<span style="color:#1496de">6916ET31</span>)</div>
<div class="t" style="left:1053px;top:551px;font-size:11.8px;color:#111;font-weight:bold;">UX-5200-</div>
<div class="t" style="left:1053px;top:567px;font-size:11.8px;color:#111;font-weight:bold;">SUPER\172854 <span style="font-weight:normal">(</span></div>
<svg class="r" style="left:1143px;top:568px" width="18" height="11" viewBox="0 0 18 11"><g fill="none" stroke="#222" stroke-width="2" stroke-linecap="round" stroke-linejoin="round"><path d="M2.5 5.5h13M6.5 1.8 2.5 5.5l4 3.7M11.5 1.8l4 3.7-4 3.7"/></g></svg>
<div class="t" style="left:1053px;top:584px;font-size:11.3px;color:#1c1c1c;font-weight:normal;">36 м)</div>
<div class="t" style="left:1176px;top:568px;font-size:11.3px;color:#1c1c1c;font-weight:normal;">-</div>
<div class="t" style="left:1297px;top:568px;font-size:11.3px;color:#1c1c1c;font-weight:normal;">102-7</div>
<div class="t" style="right:492px;top:567px;font-size:11.8px;color:#111;font-weight:bold;text-align:right;">127,00</div>
<div class="t" style="right:364px;top:560px;font-size:11.3px;color:#1c1c1c;font-weight:normal;text-align:right;">81,94%</div>
<div class="r" style="left:1437px;top:573px;width:119px;height:16px;background:#dcd3de;border:1px solid #cfc6d2;border-radius:3px"></div>
<div class="r" style="left:1437px;top:573px;width:98px;height:16px;background:#4cd964;border:1px solid #3fc957;border-radius:3px"></div>
<div class="t" style="right:266px;top:568px;font-size:11.3px;color:#1c1c1c;font-weight:normal;text-align:right;">-</div>
<div class="r" style="left:1667px;top:562px;width:32px;height:22px;background:#efefef;border:1px solid #767676;border-radius:3px"></div>
<svg class="r" style="left:1676px;top:566px" width="14" height="14" viewBox="0 0 14 14"><path d="M7 1v12M1 7h12" stroke="#000" stroke-width="2"/></svg>
<div class="t" style="right:45.5px;top:568px;font-size:11.3px;color:#1c1c1c;font-weight:normal;text-align:right;">0,00</div>
<div class="r" style="left:50px;top:605px;width:1px;height:55px;background:#444"></div>
<div class="r" style="left:132px;top:605px;width:1px;height:55px;background:#444"></div>
<div class="r" style="left:219px;top:605px;width:1px;height:55px;background:#444"></div>
<div class="r" style="left:362px;top:605px;width:1px;height:55px;background:#444"></div>
<div class="r" style="left:466px;top:605px;width:1px;height:55px;background:#444"></div>
<div class="r" style="left:581px;top:605px;width:1px;height:55px;background:#444"></div>
<div class="r" style="left:666px;top:605px;width:1px;height:55px;background:#444"></div>
<div class="r" style="left:754px;top:605px;width:1px;height:55px;background:#444"></div>
<div class="r" style="left:860px;top:605px;width:1px;height:55px;background:#444"></div>
<div class="r" style="left:944px;top:605px;width:1px;height:55px;background:#444"></div>
<div class="r" style="left:1048px;top:605px;width:1px;height:55px;background:#444"></div>
<div class="r" style="left:1171px;top:605px;width:1px;height:55px;background:#444"></div>
<div class="r" style="left:1292px;top:605px;width:1px;height:55px;background:#444"></div>
<div class="r" style="left:1349px;top:605px;width:1px;height:55px;background:#444"></div>
<div class="r" style="left:1432px;top:605px;width:1px;height:55px;background:#444"></div>
<div class="r" style="left:1560px;top:605px;width:1px;height:55px;background:#444"></div>
<div class="r" style="left:1659px;top:605px;width:1px;height:55px;background:#444"></div>
<div class="r" style="left:1766px;top:605px;width:1px;height:55px;background:#444"></div>
<div class="r" style="left:26px;top:660px;width:1853px;height:1px;background:#e6e6e6"></div>
<svg class="r" style="left:34px;top:631px" width="9" height="6" viewBox="0 0 9 6"><path d="M1.3 1.2l3.4 3.4 3.4-3.4" fill="none" stroke="#1e90e0" stroke-width="1.5"/></svg>
<svg class="r" style="left:85px;top:625px" width="15" height="17" viewBox="0 0 15 17"><path d="M4.3 9.2V3.1a1.05 1.05 0 0 1 2.1 0V8 M6.4 7.6V1.9a1.05 1.05 0 0 1 2.1 0v5.7 M8.5 7.6V2.7a1.05 1.05 0 0 1 2.1 0v5 M10.6 7.6V4a1.05 1.05 0 0 1 2.1 0v6.6c0 3.1-2 5.4-5 5.4-2.3 0-3.4-1-4.6-3L1.3 9.5c-.5-.8-.2-1.5.4-1.8.6-.3 1.2 0 1.6.5l1 1.5" fill="none" stroke="#1da1f2" stroke-width="1.2" stroke-linecap="round" stroke-linejoin="round"/></svg>
<div class="t" style="left:137px;top:628px;font-size:11.3px;color:#1c1c1c;font-weight:normal;">КУКУРУЗА</div>
<div class="t" style="left:225px;top:620px;font-size:11.3px;color:#1c1c1c;font-weight:normal;">КСС 5291#F1 ИВНЯ</div>
<div class="t" style="left:225px;top:636px;font-size:11.3px;color:#1c1c1c;font-weight:normal;">2025 ЗЕРНО</div>
<div class="t" style="left:367.5px;top:617px;font-size:11.3px;color:#1c1c1c;font-weight:normal;">ОБРАБОТКА СЗР</div>
<div class="t" style="left:367.5px;top:634px;font-size:11.3px;color:#1c1c1c;font-weight:normal;transform:scaleX(.87);transform-origin:left">ERP</div>
<div class="r" style="left:387px;top:630px;width:32px;height:22px;background:#efefef;border:1px solid #767676;border-radius:3px"></div>
<svg class="r" style="left:395px;top:635px" width="16" height="14" viewBox="0 0 16 14"><g fill="none" stroke="#000" stroke-width="1"><circle cx="2.5" cy="1.5" r="1.1"/><circle cx="2.5" cy="6.5" r="1.1"/><circle cx="2.5" cy="11.5" r="1.1"/><path d="M6 1.5h9M6 6.5h9M6 11.5h9" stroke-width="1.1"/></g></svg>
<svg class="r" style="left:470px;top:619px" width="27" height="26" viewBox="0 0 27 26"><g fill="none" stroke="#8bc34a" stroke-width="1.6" stroke-linecap="round" stroke-linejoin="round"><path d="M7.5 22.8A11.5 11.5 0 1 1 19.4 22.8L17.2 20.3H9.7z"/><path d="M13.4 14.3 19.2 7.4"/><path d="M12.4 4.3h2M4.8 12.2v1.6M22.1 12.2v1.6"/></g><circle cx="13.4" cy="14.3" r="1.7" fill="#8bc34a"/></svg>
<div class="t" style="left:474px;width:300px;top:628px;font-size:11.3px;color:#1c1c1c;font-weight:normal;text-align:center;">-</div>
<div class="t" style="left:671px;top:628px;font-size:11.3px;color:#1c1c1c;font-weight:normal;">08.07.2025</div>
<div class="t" style="left:657px;width:300px;top:620px;font-size:11.3px;color:#1c1c1c;font-weight:normal;text-align:center;">08.07.2025</div>
<div class="t" style="left:657px;width:300px;top:636px;font-size:11.3px;color:#1c1c1c;font-weight:normal;text-align:center;">12:00:01</div>
<div class="t" style="left:752px;width:300px;top:620px;font-size:11.3px;color:#1c1c1c;font-weight:normal;text-align:center;">08.07.2025</div>
<div class="t" style="left:752px;width:300px;top:636px;font-size:11.3px;color:#1c1c1c;font-weight:normal;text-align:center;">17:00:00</div>
<div class="t" style="left:949.5px;top:619px;font-size:11.8px;color:#111;font-weight:bold;">UNIPORT 4530</div>
<div class="t" style="left:949.5px;top:636px;font-size:11.3px;color:#1c1c1c;font-weight:normal;">(<span style="color:#1496de">0715EA31</span>)</div>
<div class="t" style="left:1053px;top:628px;font-size:11.3px;color:#1c1c1c;font-weight:normal;">-</div>
<div class="t" style="left:1176px;top:628px;font-size:11.3px;color:#1c1c1c;font-weight:normal;">-</div>
<div class="t" style="left:1297px;top:628px;font-size:11.3px;color:#1c1c1c;font-weight:normal;">103-18</div>
<div class="t" style="right:492px;top:627px;font-size:11.8px;color:#111;font-weight:bold;text-align:right;">59,00</div>
<div class="t" style="right:364px;top:620px;font-size:11.3px;color:#1c1c1c;font-weight:normal;text-align:right;">100,00%</div>
<div class="r" style="left:1437px;top:633px;width:119px;height:16px;background:#dcd3de;border:1px solid #cfc6d2;border-radius:3px"></div>
<div class="r" style="left:1437px;top:633px;width:119px;height:16px;background:#4cd964;border:1px solid #3fc957;border-radius:3px"></div>
<div class="t" style="right:266px;top:628px;font-size:11.3px;color:#1c1c1c;font-weight:normal;text-align:right;">-</div>
<div class="r" style="left:1667px;top:622px;width:32px;height:22px;background:#efefef;border:1px solid #767676;border-radius:3px"></div>
<svg class="r" style="left:1676px;top:626px" width="14" height="14" viewBox="0 0 14 14"><path d="M7 1v12M1 7h12" stroke="#000" stroke-width="2"/></svg>
<div class="t" style="right:45.5px;top:628px;font-size:11.3px;color:#1c1c1c;font-weight:normal;text-align:right;">0,00</div>
<div class="r" style="left:50px;top:660px;width:1px;height:65px;background:#444"></div>
<div class="r" style="left:132px;top:660px;width:1px;height:65px;background:#444"></div>
<div class="r" style="left:219px;top:660px;width:1px;height:65px;background:#444"></div>
<div class="r" style="left:362px;top:660px;width:1px;height:65px;background:#444"></div>
<div class="r" style="left:466px;top:660px;width:1px;height:65px;background:#444"></div>
<div class="r" style="left:581px;top:660px;width:1px;height:65px;background:#444"></div>
<div class="r" style="left:666px;top:660px;width:1px;height:65px;background:#444"></div>
<div class="r" style="left:754px;top:660px;width:1px;height:65px;background:#444"></div>
<div class="r" style="left:860px;top:660px;width:1px;height:65px;background:#444"></div>
<div class="r" style="left:944px;top:660px;width:1px;height:65px;background:#444"></div>
<div class="r" style="left:1048px;top:660px;width:1px;height:65px;background:#444"></div>
<div class="r" style="left:1171px;top:660px;width:1px;height:65px;background:#444"></div>
<div class="r" style="left:1292px;top:660px;width:1px;height:65px;background:#444"></div>
<div class="r" style="left:1349px;top:660px;width:1px;height:65px;background:#444"></div>
<div class="r" style="left:1432px;top:660px;width:1px;height:65px;background:#444"></div>
<div class="r" style="left:1560px;top:660px;width:1px;height:65px;background:#444"></div>
<div class="r" style="left:1659px;top:660px;width:1px;height:65px;background:#444"></div>
<div class="r" style="left:1766px;top:660px;width:1px;height:65px;background:#444"></div>
<div class="r" style="left:26px;top:725px;width:1853px;height:1px;background:#e6e6e6"></div>
<svg class="r" style="left:34px;top:691px" width="9" height="6" viewBox="0 0 9 6"><path d="M1.3 1.2l3.4 3.4 3.4-3.4" fill="none" stroke="#1e90e0" stroke-width="1.5"/></svg>
<svg class="r" style="left:85px;top:685px" width="15" height="17" viewBox="0 0 15 17"><path d="M4.3 9.2V3.1a1.05 1.05 0 0 1 2.1 0V8 M6.4 7.6V1.9a1.05 1.05 0 0 1 2.1 0v5.7 M8.5 7.6V2.7a1.05 1.05 0 0 1 2.1 0v5 M10.6 7.6V4a1.05 1.05 0 0 1 2.1 0v6.6c0 3.1-2 5.4-5 5.4-2.3 0-3.4-1-4.6-3L1.3 9.5c-.5-.8-.2-1.5.4-1.8.6-.3 1.2 0 1.6.5l1 1.5" fill="none" stroke="#1da1f2" stroke-width="1.2" stroke-linecap="round" stroke-linejoin="round"/></svg>
<div class="t" style="left:137px;top:688px;font-size:11.3px;color:#1c1c1c;font-weight:normal;">СОЯ</div>
<div class="t" style="left:225px;top:680px;font-size:11.3px;color:#1c1c1c;font-weight:normal;">ТЕМЕЛИОН#ЭС ИВНЯ</div>
<div class="t" style="left:225px;top:696px;font-size:11.3px;color:#1c1c1c;font-weight:normal;">2025 СЕМЕНА</div>
<div class="t" style="left:367.5px;top:677px;font-size:11.3px;color:#1c1c1c;font-weight:normal;">ОБРАБОТКА СЗР</div>
<div class="t" style="left:367.5px;top:694px;font-size:11.3px;color:#1c1c1c;font-weight:normal;transform:scaleX(.87);transform-origin:left">ERP</div>
<div class="r" style="left:387px;top:690px;width:32px;height:22px;background:#efefef;border:1px solid #767676;border-radius:3px"></div>
<svg class="r" style="left:395px;top:695px" width="16" height="14" viewBox="0 0 16 14"><g fill="none" stroke="#000" stroke-width="1"><circle cx="2.5" cy="1.5" r="1.1"/><circle cx="2.5" cy="6.5" r="1.1"/><circle cx="2.5" cy="11.5" r="1.1"/><path d="M6 1.5h9M6 6.5h9M6 11.5h9" stroke-width="1.1"/></g></svg>
<svg class="r" style="left:470px;top:679px" width="27" height="26" viewBox="0 0 27 26"><g fill="none" stroke="#8bc34a" stroke-width="1.6" stroke-linecap="round" stroke-linejoin="round"><path d="M7.5 22.8A11.5 11.5 0 1 1 19.4 22.8L17.2 20.3H9.7z"/><path d="M13.4 14.3 19.2 7.4"/><path d="M12.4 4.3h2M4.8 12.2v1.6M22.1 12.2v1.6"/></g><circle cx="13.4" cy="14.3" r="1.7" fill="#8bc34a"/></svg>
<div class="t" style="left:474px;width:300px;top:688px;font-size:11.3px;color:#1c1c1c;font-weight:normal;text-align:center;">-</div>
<div class="t" style="left:671px;top:688px;font-size:11.3px;color:#1c1c1c;font-weight:normal;">08.07.2025</div>
<div class="t" style="left:657px;width:300px;top:680px;font-size:11.3px;color:#1c1c1c;font-weight:normal;text-align:center;">08.07.2025</div>
<div class="t" style="left:657px;width:300px;top:696px;font-size:11.3px;color:#1c1c1c;font-weight:normal;text-align:center;">12:00:01</div>
<div class="t" style="left:752px;width:300px;top:680px;font-size:11.3px;color:#1c1c1c;font-weight:normal;text-align:center;">08.07.2025</div>
<div class="t" style="left:752px;width:300px;top:696px;font-size:11.3px;color:#1c1c1c;font-weight:normal;text-align:center;">16:00:00</div>
<div class="t" style="left:949.5px;top:679px;font-size:11.8px;color:#111;font-weight:bold;">MF 7724</div>
<div class="t" style="left:949.5px;top:696px;font-size:11.3px;color:#1c1c1c;font-weight:normal;">(<span style="color:#1496de">6916ET31</span>)</div>
<div class="t" style="left:1053px;top:671px;font-size:11.8px;color:#111;font-weight:bold;">UX-5200-</div>
<div class="t" style="left:1053px;top:687px;font-size:11.8px;color:#111;font-weight:bold;">SUPER\172854 <span style="font-weight:normal">(</span></div>
<svg class="r" style="left:1143px;top:688px" width="18" height="11" viewBox="0 0 18 11"><g fill="none" stroke="#222" stroke-width="2" stroke-linecap="round" stroke-linejoin="round"><path d="M2.5 5.5h13M6.5 1.8 2.5 5.5l4 3.7M11.5 1.8l4 3.7-4 3.7"/></g></svg>
<div class="t" style="left:1053px;top:704px;font-size:11.3px;color:#1c1c1c;font-weight:normal;">36 м)</div>
<div class="t" style="left:1176px;top:688px;font-size:11.3px;color:#1c1c1c;font-weight:normal;">-</div>
<div class="t" style="left:1297px;top:688px;font-size:11.3px;color:#1c1c1c;font-weight:normal;">102-6</div>
<div class="t" style="right:492px;top:687px;font-size:11.8px;color:#111;font-weight:bold;text-align:right;">99,00</div>
<div class="t" style="right:364px;top:680px;font-size:11.3px;color:#1c1c1c;font-weight:normal;text-align:right;">98,02%</div>
<div class="r" style="left:1437px;top:693px;width:119px;height:16px;background:#dcd3de;border:1px solid #cfc6d2;border-radius:3px"></div>
<div class="r" style="left:1437px;top:693px;width:117px;height:16px;background:#4cd964;border:1px solid #3fc957;border-radius:3px"></div>
<div class="t" style="right:266px;top:688px;font-size:11.3px;color:#1c1c1c;font-weight:normal;text-align:right;">-</div>
<div class="r" style="left:1667px;top:682px;width:32px;height:22px;background:#efefef;border:1px solid #767676;border-radius:3px"></div>
<svg class="r" style="left:1676px;top:686px" width="14" height="14" viewBox="0 0 14 14"><path d="M7 1v12M1 7h12" stroke="#000" stroke-width="2"/></svg>
<div class="t" style="right:45.5px;top:688px;font-size:11.3px;color:#1c1c1c;font-weight:normal;text-align:right;">0,00</div>
<div class="r" style="left:50px;top:725px;width:1px;height:55px;background:#444"></div>
<div class="r" style="left:132px;top:725px;width:1px;height:55px;background:#444"></div>
<div class="r" style="left:219px;top:725px;width:1px;height:55px;background:#444"></div>
<div class="r" style="left:362px;top:725px;width:1px;height:55px;background:#444"></div>
<div class="r" style="left:466px;top:725px;width:1px;height:55px;background:#444"></div>
<div class="r" style="left:581px;top:725px;width:1px;height:55px;background:#444"></div>
<div class="r" style="left:666px;top:725px;width:1px;height:55px;background:#444"></div>
<div class="r" style="left:754px;top:725px;width:1px;height:55px;background:#444"></div>
<div class="r" style="left:860px;top:725px;width:1px;height:55px;background:#444"></div>
<div class="r" style="left:944px;top:725px;width:1px;height:55px;background:#444"></div>
<div class="r" style="left:1048px;top:725px;width:1px;height:55px;background:#444"></div>
<div class="r" style="left:1171px;top:725px;width:1px;height:55px;background:#444"></div>
<div class="r" style="left:1292px;top:725px;width:1px;height:55px;background:#444"></div>
<div class="r" style="left:1349px;top:725px;width:1px;height:55px;background:#444"></div>
<div class="r" style="left:1432px;top:725px;width:1px;height:55px;background:#444"></div>
<div class="r" style="left:1560px;top:725px;width:1px;height:55px;background:#444"></div>
<div class="r" style="left:1659px;top:725px;width:1px;height:55px;background:#444"></div>
<div class="r" style="left:1766px;top:725px;width:1px;height:55px;background:#444"></div>
<div class="r" style="left:26px;top:780px;width:1853px;height:1px;background:#e6e6e6"></div>
<svg class="r" style="left:34px;top:751px" width="9" height="6" viewBox="0 0 9 6"><path d="M1.3 1.2l3.4 3.4 3.4-3.4" fill="none" stroke="#1e90e0" stroke-width="1.5"/></svg>
<svg class="r" style="left:85px;top:745px" width="15" height="17" viewBox="0 0 15 17"><path d="M4.3 9.2V3.1a1.05 1.05 0 0 1 2.1 0V8 M6.4 7.6V1.9a1.05 1.05 0 0 1 2.1 0v5.7 M8.5 7.6V2.7a1.05 1.05 0 0 1 2.1 0v5 M10.6 7.6V4a1.05 1.05 0 0 1 2.1 0v6.6c0 3.1-2 5.4-5 5.4-2.3 0-3.4-1-4.6-3L1.3 9.5c-.5-.8-.2-1.5.4-1.8.6-.3 1.2 0 1.6.5l1 1.5" fill="none" stroke="#1da1f2" stroke-width="1.2" stroke-linecap="round" stroke-linejoin="round"/></svg>
<div class="t" style="left:137px;top:748px;font-size:11.3px;color:#1c1c1c;font-weight:normal;">КУКУРУЗА</div>
<div class="t" style="left:225px;top:740px;font-size:11.3px;color:#1c1c1c;font-weight:normal;">МИКСИ#F1 ИВНЯ 2025</div>
<div class="t" style="left:225px;top:756px;font-size:11.3px;color:#1c1c1c;font-weight:normal;">ЗЕРНО</div>
<div class="t" style="left:367.5px;top:737px;font-size:11.3px;color:#1c1c1c;font-weight:normal;">ОБРАБОТКА СЗР</div>
<div class="t" style="left:367.5px;top:754px;font-size:11.3px;color:#1c1c1c;font-weight:normal;transform:scaleX(.87);transform-origin:left">ERP</div>
<div class="r" style="left:387px;top:750px;width:32px;height:22px;background:#efefef;border:1px solid #767676;border-radius:3px"></div>
<svg class="r" style="left:395px;top:755px" width="16" height="14" viewBox="0 0 16 14"><g fill="none" stroke="#000" stroke-width="1"><circle cx="2.5" cy="1.5" r="1.1"/><circle cx="2.5" cy="6.5" r="1.1"/><circle cx="2.5" cy="11.5" r="1.1"/><path d="M6 1.5h9M6 6.5h9M6 11.5h9" stroke-width="1.1"/></g></svg>
<svg class="r" style="left:470px;top:739px" width="27" height="26" viewBox="0 0 27 26"><g fill="none" stroke="#8bc34a" stroke-width="1.6" stroke-linecap="round" stroke-linejoin="round"><path d="M7.5 22.8A11.5 11.5 0 1 1 19.4 22.8L17.2 20.3H9.7z"/><path d="M13.4 14.3 19.2 7.4"/><path d="M12.4 4.3h2M4.8 12.2v1.6M22.1 12.2v1.6"/></g><circle cx="13.4" cy="14.3" r="1.7" fill="#8bc34a"/></svg>
<div class="t" style="left:474px;width:300px;top:748px;font-size:11.3px;color:#1c1c1c;font-weight:normal;text-align:center;">-</div>
<div class="t" style="left:671px;top:748px;font-size:11.3px;color:#1c1c1c;font-weight:normal;">08.07.2025</div>
<div class="t" style="left:657px;width:300px;top:740px;font-size:11.3px;color:#1c1c1c;font-weight:normal;text-align:center;">08.07.2025</div>
<div class="t" style="left:657px;width:300px;top:756px;font-size:11.3px;color:#1c1c1c;font-weight:normal;text-align:center;">15:00:01</div>
<div class="t" style="left:752px;width:300px;top:740px;font-size:11.3px;color:#1c1c1c;font-weight:normal;text-align:center;">08.07.2025</div>
<div class="t" style="left:752px;width:300px;top:756px;font-size:11.3px;color:#1c1c1c;font-weight:normal;text-align:center;">20:00:00</div>
<div class="t" style="left:949.5px;top:739px;font-size:11.8px;color:#111;font-weight:bold;">UNIPORT 4530</div>
<div class="t" style="left:949.5px;top:756px;font-size:11.3px;color:#1c1c1c;font-weight:normal;">(<span style="color:#1496de">2513EA31</span>)</div>
<div class="t" style="left:1053px;top:748px;font-size:11.3px;color:#1c1c1c;font-weight:normal;">-</div>
<div class="t" style="left:1176px;top:748px;font-size:11.3px;color:#1c1c1c;font-weight:normal;">-</div>
<div class="t" style="left:1297px;top:748px;font-size:11.3px;color:#1c1c1c;font-weight:normal;">105-27</div>
<div class="t" style="right:492px;top:747px;font-size:11.8px;color:#111;font-weight:bold;text-align:right;">38,00</div>
<div class="t" style="right:364px;top:740px;font-size:11.3px;color:#1c1c1c;font-weight:normal;text-align:right;">11,66%</div>
<div class="r" style="left:1437px;top:753px;width:119px;height:16px;background:#dcd3de;border:1px solid #cfc6d2;border-radius:3px"></div>
<div class="r" style="left:1437px;top:753px;width:14px;height:16px;background:#4cd964;border:1px solid #3fc957;border-radius:3px"></div>
<div class="t" style="right:266px;top:748px;font-size:11.3px;color:#1c1c1c;font-weight:normal;text-align:right;">-</div>
<div class="r" style="left:1667px;top:742px;width:32px;height:22px;background:#efefef;border:1px solid #767676;border-radius:3px"></div>
<svg class="r" style="left:1676px;top:746px" width="14" height="14" viewBox="0 0 14 14"><path d="M7 1v12M1 7h12" stroke="#000" stroke-width="2"/></svg>
<div class="t" style="right:45.5px;top:748px;font-size:11.3px;color:#1c1c1c;font-weight:normal;text-align:right;">0,00</div>
<div class="r" style="left:50px;top:780px;width:1px;height:65px;background:#444"></div>
<div class="r" style="left:132px;top:780px;width:1px;height:65px;background:#444"></div>
<div class="r" style="left:219px;top:780px;width:1px;height:65px;background:#444"></div>
<div class="r" style="left:362px;top:780px;width:1px;height:65px;background:#444"></div>
<div class="r" style="left:466px;top:780px;width:1px;height:65px;background:#444"></div>
<div class="r" style="left:581px;top:780px;width:1px;height:65px;background:#444"></div>
<div class="r" style="left:666px;top:780px;width:1px;height:65px;background:#444"></div>
<div class="r" style="left:754px;top:780px;width:1px;height:65px;background:#444"></div>
<div class="r" style="left:860px;top:780px;width:1px;height:65px;background:#444"></div>
<div class="r" style="left:944px;top:780px;width:1px;height:65px;background:#444"></div>
<div class="r" style="left:1048px;top:780px;width:1px;height:65px;background:#444"></div>
<div class="r" style="left:1171px;top:780px;width:1px;height:65px;background:#444"></div>
<div class="r" style="left:1292px;top:780px;width:1px;height:65px;background:#444"></div>
<div class="r" style="left:1349px;top:780px;width:1px;height:65px;background:#444"></div>
<div class="r" style="left:1432px;top:780px;width:1px;height:65px;background:#444"></div>
<div class="r" style="left:1560px;top:780px;width:1px;height:65px;background:#444"></div>
<div class="r" style="left:1659px;top:780px;width:1px;height:65px;background:#444"></div>
<div class="r" style="left:1766px;top:780px;width:1px;height:65px;background:#444"></div>
<div class="r" style="left:26px;top:845px;width:1853px;height:1px;background:#e6e6e6"></div>
<svg class="r" style="left:34px;top:811px" width="9" height="6" viewBox="0 0 9 6"><path d="M1.3 1.2l3.4 3.4 3.4-3.4" fill="none" stroke="#1e90e0" stroke-width="1.5"/></svg>
<svg class="r" style="left:85px;top:805px" width="15" height="17" viewBox="0 0 15 17"><path d="M4.3 9.2V3.1a1.05 1.05 0 0 1 2.1 0V8 M6.4 7.6V1.9a1.05 1.05 0 0 1 2.1 0v5.7 M8.5 7.6V2.7a1.05 1.05 0 0 1 2.1 0v5 M10.6 7.6V4a1.05 1.05 0 0 1 2.1 0v6.6c0 3.1-2 5.4-5 5.4-2.3 0-3.4-1-4.6-3L1.3 9.5c-.5-.8-.2-1.5.4-1.8.6-.3 1.2 0 1.6.5l1 1.5" fill="none" stroke="#1da1f2" stroke-width="1.2" stroke-linecap="round" stroke-linejoin="round"/></svg>
<div class="t" style="left:137px;top:808px;font-size:11.3px;color:#1c1c1c;font-weight:normal;">СОЯ</div>
<div class="t" style="left:225px;top:800px;font-size:11.3px;color:#1c1c1c;font-weight:normal;">ТЕМЕЛИОН#ЭС ИВНЯ</div>
<div class="t" style="left:225px;top:816px;font-size:11.3px;color:#1c1c1c;font-weight:normal;">2025 ЗЕРНО</div>
<div class="t" style="left:367.5px;top:797px;font-size:11.3px;color:#1c1c1c;font-weight:normal;">ОБРАБОТКА СЗР</div>
<div class="t" style="left:367.5px;top:814px;font-size:11.3px;color:#1c1c1c;font-weight:normal;transform:scaleX(.87);transform-origin:left">ERP</div>
<div class="r" style="left:387px;top:810px;width:32px;height:22px;background:#efefef;border:1px solid #767676;border-radius:3px"></div>
<svg class="r" style="left:395px;top:815px" width="16" height="14" viewBox="0 0 16 14"><g fill="none" stroke="#000" stroke-width="1"><circle cx="2.5" cy="1.5" r="1.1"/><circle cx="2.5" cy="6.5" r="1.1"/><circle cx="2.5" cy="11.5" r="1.1"/><path d="M6 1.5h9M6 6.5h9M6 11.5h9" stroke-width="1.1"/></g></svg>
<svg class="r" style="left:470px;top:799px" width="27" height="26" viewBox="0 0 27 26"><g fill="none" stroke="#8bc34a" stroke-width="1.6" stroke-linecap="round" stroke-linejoin="round"><path d="M7.5 22.8A11.5 11.5 0 1 1 19.4 22.8L17.2 20.3H9.7z"/><path d="M13.4 14.3 19.2 7.4"/><path d="M12.4 4.3h2M4.8 12.2v1.6M22.1 12.2v1.6"/></g><circle cx="13.4" cy="14.3" r="1.7" fill="#8bc34a"/></svg>
<div class="t" style="left:474px;width:300px;top:808px;font-size:11.3px;color:#1c1c1c;font-weight:normal;text-align:center;">-</div>
<div class="t" style="left:671px;top:808px;font-size:11.3px;color:#1c1c1c;font-weight:normal;">08.07.2025</div>
<div class="t" style="left:657px;width:300px;top:800px;font-size:11.3px;color:#1c1c1c;font-weight:normal;text-align:center;">08.07.2025</div>
<div class="t" style="left:657px;width:300px;top:816px;font-size:11.3px;color:#1c1c1c;font-weight:normal;text-align:center;">16:00:01</div>
<div class="t" style="left:752px;width:300px;top:800px;font-size:11.3px;color:#1c1c1c;font-weight:normal;text-align:center;">08.07.2025</div>
<div class="t" style="left:752px;width:300px;top:816px;font-size:11.3px;color:#1c1c1c;font-weight:normal;text-align:center;">20:00:00</div>
<div class="t" style="left:949.5px;top:799px;font-size:11.8px;color:#111;font-weight:bold;">MF 7724</div>
<div class="t" style="left:949.5px;top:816px;font-size:11.3px;color:#1c1c1c;font-weight:normal;">(<span style="color:#1496de">6916ET31</span>)</div>
<div class="t" style="left:1053px;top:791px;font-size:11.8px;color:#111;font-weight:bold;">UX-5200-</div>
<div class="t" style="left:1053px;top:807px;font-size:11.8px;color:#111;font-weight:bold;">SUPER\172854 <span style="font-weight:normal">(</span></div>
<svg class="r" style="left:1143px;top:808px" width="18" height="11" viewBox="0 0 18 11"><g fill="none" stroke="#222" stroke-width="2" stroke-linecap="round" stroke-linejoin="round"><path d="M2.5 5.5h13M6.5 1.8 2.5 5.5l4 3.7M11.5 1.8l4 3.7-4 3.7"/></g></svg>
<div class="t" style="left:1053px;top:824px;font-size:11.3px;color:#1c1c1c;font-weight:normal;">36 м)</div>
<div class="t" style="left:1176px;top:808px;font-size:11.3px;color:#1c1c1c;font-weight:normal;">-</div>
<div class="t" style="left:1297px;top:808px;font-size:11.3px;color:#1c1c1c;font-weight:normal;">102-5</div>
<div class="t" style="right:492px;top:807px;font-size:11.8px;color:#111;font-weight:bold;text-align:right;">34,00</div>
<div class="t" style="right:364px;top:800px;font-size:11.3px;color:#1c1c1c;font-weight:normal;text-align:right;">12,73%</div>
<div class="r" style="left:1437px;top:813px;width:119px;height:16px;background:#dcd3de;border:1px solid #cfc6d2;border-radius:3px"></div>
<div class="r" style="left:1437px;top:813px;width:15px;height:16px;background:#4cd964;border:1px solid #3fc957;border-radius:3px"></div>
<div class="t" style="right:266px;top:808px;font-size:11.3px;color:#1c1c1c;font-weight:normal;text-align:right;">-</div>
<div class="r" style="left:1667px;top:802px;width:32px;height:22px;background:#efefef;border:1px solid #767676;border-radius:3px"></div>
<svg class="r" style="left:1676px;top:806px" width="14" height="14" viewBox="0 0 14 14"><path d="M7 1v12M1 7h12" stroke="#000" stroke-width="2"/></svg>
<div class="t" style="right:45.5px;top:808px;font-size:11.3px;color:#1c1c1c;font-weight:normal;text-align:right;">0,00</div>
<div class="r" style="left:50px;top:845px;width:1px;height:55px;background:#444"></div>
<div class="r" style="left:132px;top:845px;width:1px;height:55px;background:#444"></div>
<div class="r" style="left:219px;top:845px;width:1px;height:55px;background:#444"></div>
<div class="r" style="left:362px;top:845px;width:1px;height:55px;background:#444"></div>
<div class="r" style="left:466px;top:845px;width:1px;height:55px;background:#444"></div>
<div class="r" style="left:581px;top:845px;width:1px;height:55px;background:#444"></div>
<div class="r" style="left:666px;top:845px;width:1px;height:55px;background:#444"></div>
<div class="r" style="left:754px;top:845px;width:1px;height:55px;background:#444"></div>
<div class="r" style="left:860px;top:845px;width:1px;height:55px;background:#444"></div>
<div class="r" style="left:944px;top:845px;width:1px;height:55px;background:#444"></div>
<div class="r" style="left:1048px;top:845px;width:1px;height:55px;background:#444"></div>
<div class="r" style="left:1171px;top:845px;width:1px;height:55px;background:#444"></div>
<div class="r" style="left:1292px;top:845px;width:1px;height:55px;background:#444"></div>
<div class="r" style="left:1349px;top:845px;width:1px;height:55px;background:#444"></div>
<div class="r" style="left:1432px;top:845px;width:1px;height:55px;background:#444"></div>
<div class="r" style="left:1560px;top:845px;width:1px;height:55px;background:#444"></div>
<div class="r" style="left:1659px;top:845px;width:1px;height:55px;background:#444"></div>
<div class="r" style="left:1766px;top:845px;width:1px;height:55px;background:#444"></div>
<div class="r" style="left:26px;top:900px;width:1853px;height:1px;background:#e6e6e6"></div>
<svg class="r" style="left:34px;top:871px" width="9" height="6" viewBox="0 0 9 6"><path d="M1.3 1.2l3.4 3.4 3.4-3.4" fill="none" stroke="#1e90e0" stroke-width="1.5"/></svg>
<svg class="r" style="left:85px;top:865px" width="15" height="17" viewBox="0 0 15 17"><path d="M4.3 9.2V3.1a1.05 1.05 0 0 1 2.1 0V8 M6.4 7.6V1.9a1.05 1.05 0 0 1 2.1 0v5.7 M8.5 7.6V2.7a1.05 1.05 0 0 1 2.1 0v5 M10.6 7.6V4a1.05 1.05 0 0 1 2.1 0v6.6c0 3.1-2 5.4-5 5.4-2.3 0-3.4-1-4.6-3L1.3 9.5c-.5-.8-.2-1.5.4-1.8.6-.3 1.2 0 1.6.5l1 1.5" fill="none" stroke="#1da1f2" stroke-width="1.2" stroke-linecap="round" stroke-linejoin="round"/></svg>
<div class="t" style="left:137px;top:868px;font-size:11.3px;color:#1c1c1c;font-weight:normal;">СОЯ</div>
<div class="t" style="left:225px;top:860px;font-size:11.3px;color:#1c1c1c;font-weight:normal;">ТЕМЕЛИОН#РС-1 ИВНЯ</div>
<div class="t" style="left:225px;top:876px;font-size:11.3px;color:#1c1c1c;font-weight:normal;">2025 ЗЕРНО</div>
<div class="t" style="left:367.5px;top:857px;font-size:11.3px;color:#1c1c1c;font-weight:normal;">ОБРАБОТКА СЗР</div>
<div class="t" style="left:367.5px;top:874px;font-size:11.3px;color:#1c1c1c;font-weight:normal;transform:scaleX(.87);transform-origin:left">ERP</div>
<div class="r" style="left:387px;top:870px;width:32px;height:22px;background:#efefef;border:1px solid #767676;border-radius:3px"></div>
<svg class="r" style="left:395px;top:875px" width="16" height="14" viewBox="0 0 16 14"><g fill="none" stroke="#000" stroke-width="1"><circle cx="2.5" cy="1.5" r="1.1"/><circle cx="2.5" cy="6.5" r="1.1"/><circle cx="2.5" cy="11.5" r="1.1"/><path d="M6 1.5h9M6 6.5h9M6 11.5h9" stroke-width="1.1"/></g></svg>
<svg class="r" style="left:470px;top:859px" width="27" height="26" viewBox="0 0 27 26"><g fill="none" stroke="#8bc34a" stroke-width="1.6" stroke-linecap="round" stroke-linejoin="round"><path d="M7.5 22.8A11.5 11.5 0 1 1 19.4 22.8L17.2 20.3H9.7z"/><path d="M13.4 14.3 19.2 7.4"/><path d="M12.4 4.3h2M4.8 12.2v1.6M22.1 12.2v1.6"/></g><circle cx="13.4" cy="14.3" r="1.7" fill="#8bc34a"/></svg>
<div class="t" style="left:474px;width:300px;top:868px;font-size:11.3px;color:#1c1c1c;font-weight:normal;text-align:center;">-</div>
<div class="t" style="left:671px;top:868px;font-size:11.3px;color:#1c1c1c;font-weight:normal;">08.07.2025</div>
<div class="t" style="left:657px;width:300px;top:860px;font-size:11.3px;color:#1c1c1c;font-weight:normal;text-align:center;">08.07.2025</div>
<div class="t" style="left:657px;width:300px;top:876px;font-size:11.3px;color:#1c1c1c;font-weight:normal;text-align:center;">16:00:01</div>
<div class="t" style="left:752px;width:300px;top:860px;font-size:11.3px;color:#1c1c1c;font-weight:normal;text-align:center;">08.07.2025</div>
<div class="t" style="left:752px;width:300px;top:876px;font-size:11.3px;color:#1c1c1c;font-weight:normal;text-align:center;">20:00:00</div>
<div class="t" style="left:949.5px;top:859px;font-size:11.8px;color:#111;font-weight:bold;">UNIPORT 4530</div>
<div class="t" style="left:949.5px;top:876px;font-size:11.3px;color:#1c1c1c;font-weight:normal;">(<span style="color:#1496de">0716EA31</span>)</div>
<div class="t" style="left:1053px;top:868px;font-size:11.3px;color:#1c1c1c;font-weight:normal;">-</div>
<div class="t" style="left:1176px;top:868px;font-size:11.3px;color:#1c1c1c;font-weight:normal;">-</div>
<div class="t" style="left:1297px;top:868px;font-size:11.3px;color:#1c1c1c;font-weight:normal;">105-18</div>
<div class="t" style="right:492px;top:867px;font-size:11.8px;color:#111;font-weight:bold;text-align:right;">87,00</div>
<div class="t" style="right:364px;top:860px;font-size:11.3px;color:#1c1c1c;font-weight:normal;text-align:right;">46,03%</div>
<div class="r" style="left:1437px;top:873px;width:119px;height:16px;background:#dcd3de;border:1px solid #cfc6d2;border-radius:3px"></div>
<div class="r" style="left:1437px;top:873px;width:55px;height:16px;background:#4cd964;border:1px solid #3fc957;border-radius:3px"></div>
<div class="t" style="right:266px;top:868px;font-size:11.3px;color:#1c1c1c;font-weight:normal;text-align:right;">-</div>
<div class="r" style="left:1667px;top:862px;width:32px;height:22px;background:#efefef;border:1px solid #767676;border-radius:3px"></div>
<svg class="r" style="left:1676px;top:866px" width="14" height="14" viewBox="0 0 14 14"><path d="M7 1v12M1 7h12" stroke="#000" stroke-width="2"/></svg>
<div class="t" style="right:45.5px;top:868px;font-size:11.3px;color:#1c1c1c;font-weight:normal;text-align:right;">0,00</div>
<div class="r" style="left:50px;top:900px;width:1px;height:55px;background:#444"></div>
<div class="r" style="left:132px;top:900px;width:1px;height:55px;background:#444"></div>
<div class="r" style="left:219px;top:900px;width:1px;height:55px;background:#444"></div>
<div class="r" style="left:362px;top:900px;width:1px;height:55px;background:#444"></div>
<div class="r" style="left:466px;top:900px;width:1px;height:55px;background:#444"></div>
<div class="r" style="left:581px;top:900px;width:1px;height:55px;background:#444"></div>
<div class="r" style="left:666px;top:900px;width:1px;height:55px;background:#444"></div>
<div class="r" style="left:754px;top:900px;width:1px;height:55px;background:#444"></div>
<div class="r" style="left:860px;top:900px;width:1px;height:55px;background:#444"></div>
<div class="r" style="left:944px;top:900px;width:1px;height:55px;background:#444"></div>
<div class="r" style="left:1048px;top:900px;width:1px;height:55px;background:#444"></div>
<div class="r" style="left:1171px;top:900px;width:1px;height:55px;background:#444"></div>
<div class="r" style="left:1292px;top:900px;width:1px;height:55px;background:#444"></div>
<div class="r" style="left:1349px;top:900px;width:1px;height:55px;background:#444"></div>
<div class="r" style="left:1432px;top:900px;width:1px;height:55px;background:#444"></div>
<div class="r" style="left:1560px;top:900px;width:1px;height:55px;background:#444"></div>
<div class="r" style="left:1659px;top:900px;width:1px;height:55px;background:#444"></div>
<div class="r" style="left:1766px;top:900px;width:1px;height:55px;background:#444"></div>
<svg class="r" style="left:34px;top:926px" width="9" height="6" viewBox="0 0 9 6"><path d="M1.3 1.2l3.4 3.4 3.4-3.4" fill="none" stroke="#1e90e0" stroke-width="1.5"/></svg>
<svg class="r" style="left:85px;top:920px" width="15" height="17" viewBox="0 0 15 17"><path d="M4.3 9.2V3.1a1.05 1.05 0 0 1 2.1 0V8 M6.4 7.6V1.9a1.05 1.05 0 0 1 2.1 0v5.7 M8.5 7.6V2.7a1.05 1.05 0 0 1 2.1 0v5 M10.6 7.6V4a1.05 1.05 0 0 1 2.1 0v6.6c0 3.1-2 5.4-5 5.4-2.3 0-3.4-1-4.6-3L1.3 9.5c-.5-.8-.2-1.5.4-1.8.6-.3 1.2 0 1.6.5l1 1.5" fill="none" stroke="#1da1f2" stroke-width="1.2" stroke-linecap="round" stroke-linejoin="round"/></svg>
<div class="t" style="left:137px;top:923px;font-size:11.3px;color:#1c1c1c;font-weight:normal;">КУКУРУЗА</div>
<div class="t" style="left:225px;top:915px;font-size:11.3px;color:#1c1c1c;font-weight:normal;">КСС 3200#F1 ИВНЯ</div>
<div class="t" style="left:225px;top:931px;font-size:11.3px;color:#1c1c1c;font-weight:normal;">2025 ЗЕРНО</div>
<div class="t" style="left:367.5px;top:912px;font-size:11.3px;color:#1c1c1c;font-weight:normal;">ОБРАБОТКА СЗР</div>
<div class="t" style="left:367.5px;top:929px;font-size:11.3px;color:#1c1c1c;font-weight:normal;transform:scaleX(.87);transform-origin:left">ERP</div>
<div class="r" style="left:387px;top:925px;width:32px;height:22px;background:#efefef;border:1px solid #767676;border-radius:3px"></div>
<svg class="r" style="left:395px;top:930px" width="16" height="14" viewBox="0 0 16 14"><g fill="none" stroke="#000" stroke-width="1"><circle cx="2.5" cy="1.5" r="1.1"/><circle cx="2.5" cy="6.5" r="1.1"/><circle cx="2.5" cy="11.5" r="1.1"/><path d="M6 1.5h9M6 6.5h9M6 11.5h9" stroke-width="1.1"/></g></svg>
<svg class="r" style="left:470px;top:914px" width="27" height="26" viewBox="0 0 27 26"><g fill="none" stroke="#8bc34a" stroke-width="1.6" stroke-linecap="round" stroke-linejoin="round"><path d="M7.5 22.8A11.5 11.5 0 1 1 19.4 22.8L17.2 20.3H9.7z"/><path d="M13.4 14.3 19.2 7.4"/><path d="M12.4 4.3h2M4.8 12.2v1.6M22.1 12.2v1.6"/></g><circle cx="13.4" cy="14.3" r="1.7" fill="#8bc34a"/></svg>
<div class="t" style="left:474px;width:300px;top:923px;font-size:11.3px;color:#1c1c1c;font-weight:normal;text-align:center;">-</div>
<div class="t" style="left:671px;top:923px;font-size:11.3px;color:#1c1c1c;font-weight:normal;">08.07.2025</div>
<div class="t" style="left:657px;width:300px;top:915px;font-size:11.3px;color:#1c1c1c;font-weight:normal;text-align:center;">08.07.2025</div>
<div class="t" style="left:657px;width:300px;top:931px;font-size:11.3px;color:#1c1c1c;font-weight:normal;text-align:center;">17:00:01</div>
<div class="t" style="left:752px;width:300px;top:915px;font-size:11.3px;color:#1c1c1c;font-weight:normal;text-align:center;">08.07.2025</div>
<div class="t" style="left:752px;width:300px;top:931px;font-size:11.3px;color:#1c1c1c;font-weight:normal;text-align:center;">20:00:00</div>
<div class="t" style="left:949.5px;top:914px;font-size:11.8px;color:#111;font-weight:bold;">UNIPORT 4530</div>
<div class="t" style="left:949.5px;top:931px;font-size:11.3px;color:#1c1c1c;font-weight:normal;">(<span style="color:#1496de">0715EA31</span>)</div>
<div class="t" style="left:1053px;top:923px;font-size:11.3px;color:#1c1c1c;font-weight:normal;">-</div>
<div class="t" style="left:1176px;top:923px;font-size:11.3px;color:#1c1c1c;font-weight:normal;">-</div>
<div class="t" style="left:1297px;top:923px;font-size:11.3px;color:#1c1c1c;font-weight:normal;">103-19</div>
<div class="t" style="right:492px;top:922px;font-size:11.8px;color:#111;font-weight:bold;text-align:right;">52,00</div>
<div class="t" style="right:364px;top:915px;font-size:11.3px;color:#1c1c1c;font-weight:normal;text-align:right;">100,00%</div>
<div class="r" style="left:1437px;top:928px;width:119px;height:16px;background:#dcd3de;border:1px solid #cfc6d2;border-radius:3px"></div>
<div class="r" style="left:1437px;top:928px;width:119px;height:16px;background:#4cd964;border:1px solid #3fc957;border-radius:3px"></div>
<div class="t" style="right:266px;top:923px;font-size:11.3px;color:#1c1c1c;font-weight:normal;text-align:right;">-</div>
<div class="r" style="left:1667px;top:917px;width:32px;height:22px;background:#efefef;border:1px solid #767676;border-radius:3px"></div>
<svg class="r" style="left:1676px;top:921px" width="14" height="14" viewBox="0 0 14 14"><path d="M7 1v12M1 7h12" stroke="#000" stroke-width="2"/></svg>
<div class="t" style="right:45.5px;top:923px;font-size:11.3px;color:#1c1c1c;font-weight:normal;text-align:right;">0,00</div>
<div class="r" style="left:1905px;top:0px;width:15px;height:945px;background:#2b2b2b"></div>
<svg class="r" style="left:1905px;top:0px" width="15" height="18" viewBox="0 0 15 18"><path d="M3.5 11.5h8L7.5 5z" fill="#a3a3a3"/></svg>
<svg class="r" style="left:1905px;top:927px" width="15" height="18" viewBox="0 0 15 18"><path d="M3.5 6h8L7.5 12.5z" fill="#a3a3a3"/></svg>
<div class="r" style="left:1908px;top:18px;width:9px;height:784px;background:#a3a3a3;border-radius:5px"></div>
</body></html>
